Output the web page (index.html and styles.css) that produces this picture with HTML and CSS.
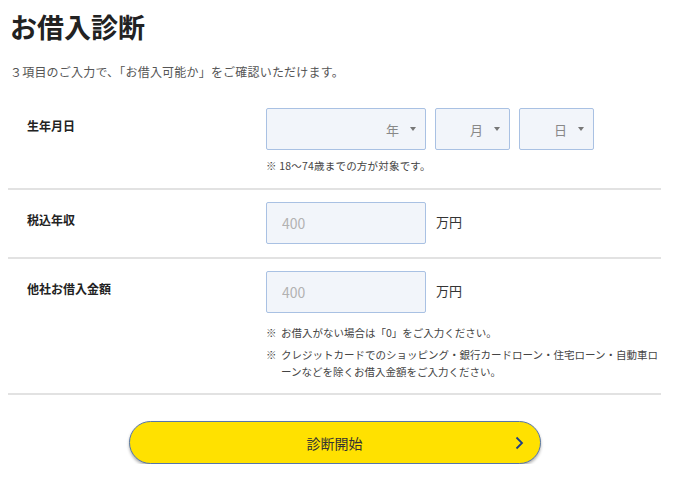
FILE: index.html
```html
<!DOCTYPE html>
<html lang="ja">
<head>
  <meta charset="UTF-8" />
  <meta name="viewport" content="width=device-width, initial-scale=1.0" />
  <title>お借入診断</title>
  <link rel="stylesheet" href="styles.css">
</head>
<body>

<div class="diag">
  <h1 class="diag-title">お借入診断</h1>
  <p class="diag-lead">３項目のご入力で、「お借入可能か」をご確認いただけます。</p>

  <form class="diag-form" onsubmit="return false;">

    <div class="row">
      <div class="row-label">生年月日</div>
      <div class="row-body">
        <div class="selects">
          <div class="select select-year">
            <select><option>年</option></select>
          </div>
          <div class="select select-short">
            <select><option>月</option></select>
          </div>
          <div class="select select-short">
            <select><option>日</option></select>
          </div>
        </div>
        <p class="note">※ 18〜74歳までの方が対象です。</p>
      </div>
    </div>

    <div class="row">
      <div class="row-label">税込年収</div>
      <div class="row-body">
        <div class="field">
          <input type="text" class="text-input" placeholder="400" />
          <span class="unit">万円</span>
        </div>
      </div>
    </div>

    <div class="row">
      <div class="row-label">他社お借入金額</div>
      <div class="row-body">
        <div class="field">
          <input type="text" class="text-input" placeholder="400" />
          <span class="unit">万円</span>
        </div>
        <ul class="notes">
          <li>お借入がない場合は「0」をご入力ください。</li>
          <li>クレジットカードでのショッピング・銀行カードローン・住宅ローン・自動車ローンなどを除くお借入金額をご入力ください。</li>
        </ul>
      </div>
    </div>

    <div class="submit-wrap">
      <button type="submit" class="submit-btn">
        診断開始
        <svg class="submit-arrow" width="9" height="14" viewBox="0 0 9 14">
          <path d="M1.5 1.5 L7 7 L1.5 12.5" fill="none" stroke="#1d3f86" stroke-width="1.8" />
        </svg>
      </button>
    </div>

  </form>
</div>

</body>
</html>
```

FILE: styles.css
```css
* {
  box-sizing: border-box;
}

body {
  margin: 0;
  background: #fff;
  color: #333;
  font-family: "Noto Sans CJK JP", "Noto Sans", sans-serif;
}

.diag {
  width: 653px;
  margin-left: 8px;
}

.diag-title {
  margin: 13px 0 0 2px;
  font-size: 27px;
  line-height: 28px;
  font-weight: bold;
  color: #222;
}

.diag-lead {
  margin: 22px 0 0 2px;
  font-size: 12px;
  line-height: 18px;
  letter-spacing: 0.2px;
  color: #555;
}

.diag-form {
  margin-top: 14px;
}

.row {
  display: grid;
  grid-template-columns: 258px 1fr;
  padding: 12px 0 13px;
  border-bottom: 2px solid #e2e2e2;
}

.row:first-child {
  padding-top: 13px;
  padding-bottom: 14px;
}

.row-label {
  padding: 9px 0 0 19px;
  font-size: 12px;
  line-height: 18px;
  font-weight: bold;
  color: #222;
}

.selects {
  display: flex;
  gap: 9px;
}

.select {
  position: relative;
  height: 42px;
}

.select-year {
  width: 160px;
}

.select-short {
  width: 75px;
}

.select select {
  appearance: none;
  -webkit-appearance: none;
  width: 100%;
  height: 100%;
  padding: 0 26px 0 8px;
  border: 1px solid #a9c1e3;
  border-radius: 2px;
  background: #f2f5fa;
  color: #888;
  font-family: inherit;
  font-size: 13px;
  text-align: right;
  text-align-last: right;
}

.select::after {
  content: "";
  position: absolute;
  right: 10px;
  top: 19px;
  border-left: 3.5px solid transparent;
  border-right: 3.5px solid transparent;
  border-top: 4px solid #777;
  pointer-events: none;
}

.note {
  margin: 8px 0 0;
  font-size: 10.5px;
  line-height: 16px;
  letter-spacing: 0.2px;
  color: #444;
}

.field {
  display: flex;
  align-items: center;
}

.text-input {
  width: 160px;
  height: 42px;
  padding: 0 15px;
  border: 1px solid #a9c1e3;
  border-radius: 2px;
  background: #f2f5fa;
  font-family: inherit;
  font-size: 14px;
  color: #333;
}

.text-input::placeholder {
  color: #b2b2b2;
}

.unit {
  margin-left: 10px;
  padding-bottom: 3px;
  font-size: 13px;
  color: #333;
}

.notes {
  margin: 11px 0 0;
  padding: 0;
  list-style: none;
  font-size: 10.5px;
  line-height: 17px;
  color: #444;
}

.notes li {
  position: relative;
  padding-left: 15px;
}

.notes li + li {
  margin-top: 5px;
}

.notes li::before {
  content: "※";
  position: absolute;
  left: 0;
  top: 0;
}

.submit-wrap {
  display: flex;
  justify-content: center;
  margin-top: 26px;
}

.submit-btn {
  position: relative;
  width: 412px;
  height: 43px;
  border: 1px solid #5676ab;
  border-radius: 22px;
  background: #ffe100;
  box-shadow: 0 2px 3px rgba(0, 0, 0, 0.3);
  font-family: inherit;
  font-size: 14px;
  color: #333;
  cursor: pointer;
}

.submit-arrow {
  position: absolute;
  right: 16px;
  top: 14px;
}
```
